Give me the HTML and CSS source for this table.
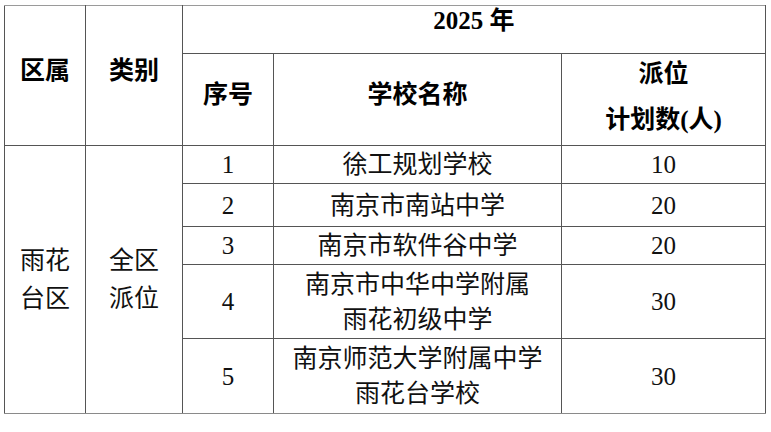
FILE: index.html
```html
<!DOCTYPE html>
<html lang="zh-CN">
<head>
<meta charset="utf-8">
<title>2025年 雨花台区 全区派位</title>
<link rel="stylesheet" href="styles.css">
</head>
<body>
<table class="plan">
  <colgroup>
    <col class="c-area">
    <col class="c-type">
    <col class="c-no">
    <col class="c-name">
    <col class="c-num">
  </colgroup>
  <thead>
    <tr class="h-year">
      <th rowspan="2" class="h-side">区属</th>
      <th rowspan="2" class="h-side">类别</th>
      <th colspan="3" class="year">2025 年</th>
    </tr>
    <tr class="h-cols">
      <th>序号</th>
      <th>学校名称</th>
      <th class="two"><span class="stack">派位<br>计划数(人)</span></th>
    </tr>
  </thead>
  <tbody>
    <tr class="r1">
      <td rowspan="5" class="side">雨花<br>台区</td>
      <td rowspan="5" class="side">全区<br>派位</td>
      <td class="num">1</td>
      <td class="name">徐工规划学校</td>
      <td class="num">10</td>
    </tr>
    <tr class="r2">
      <td class="num">2</td>
      <td class="name">南京市南站中学</td>
      <td class="num">20</td>
    </tr>
    <tr class="r3">
      <td class="num">3</td>
      <td class="name">南京市软件谷中学</td>
      <td class="num">20</td>
    </tr>
    <tr class="r4">
      <td class="num">4</td>
      <td class="name">南京市中华中学附属<br>雨花初级中学</td>
      <td class="num">30</td>
    </tr>
    <tr class="r5">
      <td class="num">5</td>
      <td class="name">南京师范大学附属中学<br>雨花台学校</td>
      <td class="num">30</td>
    </tr>
  </tbody>
</table>
</body>
</html>
```

FILE: styles.css
```css
html, body {
  margin: 0;
  padding: 0;
  background: #ffffff;
}

body {
  padding: 5px 0 0 4px;
  font-family: "Liberation Serif", "Noto Sans CJK SC", serif;
  color: #111111;
}

.plan {
  border-collapse: collapse;
  table-layout: fixed;
  width: 761px;
  font-size: 25px;
}

.c-area { width: 81px; }
.c-type { width: 97px; }
.c-no { width: 91px; }
.c-name { width: 288px; }
.c-num { width: 204px; }

.plan th,
.plan td {
  border: 1px solid #555555;
  padding: 0;
  text-align: center;
  vertical-align: middle;
}

.plan thead tr:first-child th {
  border-top-color: #9a9a9a;
}

.plan tbody tr:last-child td,
.plan td.side {
  border-bottom-color: #8a8a8a;
}

.plan th {
  font-weight: 700;
  line-height: 30px;
  color: #000000;
  vertical-align: top;
}

.plan th.h-side {
  padding-top: 50px;
}

.h-year { height: 48px; }

.h-cols { height: 92px; }
.plan .h-cols th { padding-top: 26px; }
.plan .h-cols th.two {
  padding-top: 0;
  line-height: 46px;
}

.stack {
  display: block;
  margin-top: -3px;
}

.plan td {
  font-weight: 400;
  line-height: 35px;
  color: #111111;
}

.plan td.side {
  line-height: 38px;
}

.r1 { height: 38px; }
.r2 { height: 43px; }
.r3 { height: 38px; }
.r4 { height: 74px; }
.r5 { height: 75px; }

.r2 td.num, .r2 td.name { border-top-color: #9a9a9a; }
.r3 td.num, .r3 td.name { border-top-color: #9a9a9a; }
```
